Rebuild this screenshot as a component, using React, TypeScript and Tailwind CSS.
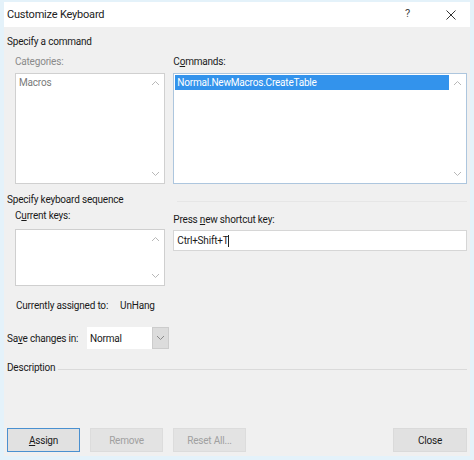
import React from "react";

const Up = () => (
  <svg width="9" height="6" viewBox="0 0 9 6" className="block">
    <path d="M1 5 L4.5 1.5 L8 5" fill="none" stroke="#b8b8b8" strokeWidth="1" />
  </svg>
);
const Down = ({ c = "#b8b8b8" }: { c?: string }) => (
  <svg width="9" height="6" viewBox="0 0 9 6" className="block">
    <path d="M1 1 L4.5 4.5 L8 1" fill="none" stroke={c} strokeWidth="1" />
  </svg>
);

const ScrollBar = () => (
  <div className="w-[17px] h-full flex flex-col items-center justify-between py-[6px] shrink-0">
    <Up />
    <Down />
  </div>
);

export default function App() {
  return (
    <div
      className="w-[474px] h-[460px] bg-[#e4f2fa] pt-[2px] px-[4px] pb-[4px] text-[10px] tracking-[-0.2px] text-[#1a1a1a] whitespace-nowrap"
      style={{ fontFamily: 'Roboto, "Noto Sans", sans-serif' }}
    >
      <div className="w-full h-full flex flex-col bg-[#f0f0f0]">
        {/* title bar */}
        <div className="h-[25px] bg-white flex items-center pl-[3px] shrink-0">
          <span className="text-[11px] text-[#222] mt-[2px]">Customize Keyboard</span>
          <span className="ml-auto mr-[36px] text-[11px] text-[#444]">?</span>
          <svg width="10" height="10" viewBox="0 0 10 10" className="mr-[14px]">
            <path d="M0.5 0.5 L9.5 9.5 M9.5 0.5 L0.5 9.5" stroke="#333" strokeWidth="1" />
          </svg>
        </div>

        <div className="flex flex-col pl-[3px] pr-[3px]">
          <div className="mt-[7px] leading-[16px]">Specify a command</div>

          <div className="flex mt-[4px] pl-[8px] gap-[8px]">
            <div className="flex flex-col w-[151px]">
              <div className="leading-[16px] text-[#8a8a8a]">Categories:</div>
              <div className="mt-[3px] h-[111px] bg-white border border-[#d0d0d0] flex">
                <div className="flex-1 pl-[3px] pt-[1px] text-[#7a7a7a] leading-[16px]">Macros</div>
                <ScrollBar />
              </div>
            </div>
            <div className="flex flex-col w-[295px]">
              <div className="leading-[16px]">
                C<span className="underline">o</span>mmands:
              </div>
              <div className="mt-[3px] h-[111px] bg-white border border-[#adc6de] flex">
                <div className="flex-1 pl-[1px] pt-[1px]">
                  <div className="bg-[#3393ec] text-white leading-[15px] pl-[2px]">
                    Normal.NewMacros.CreateTable
                  </div>
                </div>
                <ScrollBar />
              </div>
            </div>
          </div>

          <div className="flex items-center mt-[8px] leading-[16px]">
            <span>Specify keyboard sequence</span>
          </div>
          <div className="h-px bg-[#e6e6e6] ml-[170px] -mt-[7px]" />

          <div className="flex mt-[6px] pl-[8px] gap-[8px]">
            <div className="flex flex-col w-[151px]">
              <div className="leading-[16px]">
                C<span className="underline">u</span>rrent keys:
              </div>
              <div className="mt-[5px] h-[57px] bg-white border border-[#cfcfcf] flex">
                <div className="flex-1" />
                <ScrollBar />
              </div>
            </div>
            <div className="flex flex-col w-[295px]">
              <div className="leading-[16px] mt-[4px]">
                Press <span className="underline">n</span>ew shortcut key:
              </div>
              <div className="mt-[2px] h-[21px] bg-white border border-[#d6d6d6] flex items-center pl-[3px]">
                <span>Ctrl+Shift+T</span>
                <span className="inline-block w-px h-[12px] bg-[#222]" />
              </div>
            </div>
          </div>

          <div className="flex mt-[12px] pl-[9px] leading-[16px]">
            <span>Currently assigned to:</span>
            <span className="ml-[12px]">UnHang</span>
          </div>

          <div className="flex items-center mt-[13px]">
            <span className="w-[80px]">
              Sa<span className="underline">v</span>e changes in:
            </span>
            <div className="h-[22px] w-[82px] flex bg-white">
              <div className="flex-1 flex items-center pl-[3px]">Normal</div>
              <div className="w-[17px] bg-[#dcdcdc] border border-[#cccccc] flex items-center justify-center">
                <Down c="#8a8a8a" />
              </div>
            </div>
          </div>

          <div className="flex items-center mt-[11px]">
            <span className="leading-[16px]">Description</span>
            <div className="flex-1 h-px bg-[#dadada] ml-[3px] mt-[2px]" />
          </div>
        </div>

        <div className="mt-auto flex items-center px-[3px] pb-[4px] gap-[10px]">
          <div className="w-[73px] h-[24px] bg-[#e1e1e1] border border-[#4a90d0] flex items-center justify-center">
            <span className="underline">A</span>ssign
          </div>
          <div className="w-[73px] h-[24px] bg-[#e3e3e3] border border-[#dcdcdc] flex items-center justify-center text-[#a0a0a0]">
            Remove
          </div>
          <div className="w-[73px] h-[24px] bg-[#e3e3e3] border border-[#dcdcdc] flex items-center justify-center text-[#a0a0a0]">
            Reset All...
          </div>
          <div className="ml-auto w-[74px] h-[24px] bg-[#e1e1e1] border border-[#dadada] flex items-center justify-center">
            Close
          </div>
        </div>
      </div>
    </div>
  );
}
